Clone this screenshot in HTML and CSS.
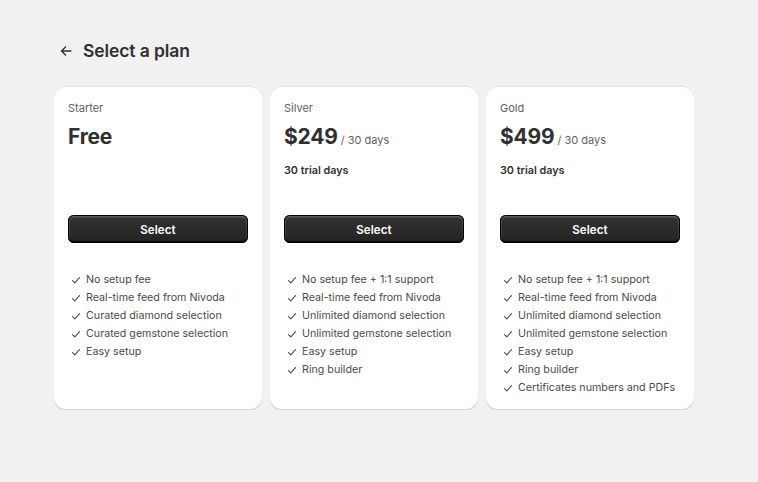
FILE: index.html
```html
<!DOCTYPE html>
<html lang="en">
<head>
<meta charset="utf-8">
<title>Select a plan</title>
<link rel="stylesheet" href="styles.css">
</head>
<body>
<div class="page">
  <div class="header">
    <button class="back" aria-label="Back">
      <svg width="14" height="14" viewBox="0 0 14 14"><path d="M12 7H2.5M6.5 3 2.5 7l4 4" fill="none" stroke="#303030" stroke-width="1.4" stroke-linecap="round" stroke-linejoin="round"/></svg>
    </button>
    <h1 class="title">Select a plan</h1>
  </div>
  <div class="plans">
    <div class="card">
      <div class="top">
        <div class="name">Starter</div>
        <div class="price"><span class="amount">Free</span></div>
      </div>
      <button class="select">Select</button>
      <ul class="features">
        <li><svg class="check" viewBox="0 0 10 10"><path d="M1.5 5.6 3.8 7.8 8.5 2.6" fill="none" stroke="#4a4a4a" stroke-width="1.1" stroke-linecap="round" stroke-linejoin="round"/></svg>No setup fee</li>
        <li><svg class="check" viewBox="0 0 10 10"><path d="M1.5 5.6 3.8 7.8 8.5 2.6" fill="none" stroke="#4a4a4a" stroke-width="1.1" stroke-linecap="round" stroke-linejoin="round"/></svg>Real-time feed from Nivoda</li>
        <li><svg class="check" viewBox="0 0 10 10"><path d="M1.5 5.6 3.8 7.8 8.5 2.6" fill="none" stroke="#4a4a4a" stroke-width="1.1" stroke-linecap="round" stroke-linejoin="round"/></svg>Curated diamond selection</li>
        <li><svg class="check" viewBox="0 0 10 10"><path d="M1.5 5.6 3.8 7.8 8.5 2.6" fill="none" stroke="#4a4a4a" stroke-width="1.1" stroke-linecap="round" stroke-linejoin="round"/></svg>Curated gemstone selection</li>
        <li><svg class="check" viewBox="0 0 10 10"><path d="M1.5 5.6 3.8 7.8 8.5 2.6" fill="none" stroke="#4a4a4a" stroke-width="1.1" stroke-linecap="round" stroke-linejoin="round"/></svg>Easy setup</li>
      </ul>
    </div>
    <div class="card">
      <div class="top">
        <div class="name">Silver</div>
        <div class="price"><span class="amount">$249</span><span class="period">/ 30 days</span></div>
        <div class="trial">30 trial days</div>
      </div>
      <button class="select">Select</button>
      <ul class="features">
        <li><svg class="check" viewBox="0 0 10 10"><path d="M1.5 5.6 3.8 7.8 8.5 2.6" fill="none" stroke="#4a4a4a" stroke-width="1.1" stroke-linecap="round" stroke-linejoin="round"/></svg>No setup fee + 1:1 support</li>
        <li><svg class="check" viewBox="0 0 10 10"><path d="M1.5 5.6 3.8 7.8 8.5 2.6" fill="none" stroke="#4a4a4a" stroke-width="1.1" stroke-linecap="round" stroke-linejoin="round"/></svg>Real-time feed from Nivoda</li>
        <li><svg class="check" viewBox="0 0 10 10"><path d="M1.5 5.6 3.8 7.8 8.5 2.6" fill="none" stroke="#4a4a4a" stroke-width="1.1" stroke-linecap="round" stroke-linejoin="round"/></svg>Unlimited diamond selection</li>
        <li><svg class="check" viewBox="0 0 10 10"><path d="M1.5 5.6 3.8 7.8 8.5 2.6" fill="none" stroke="#4a4a4a" stroke-width="1.1" stroke-linecap="round" stroke-linejoin="round"/></svg>Unlimited gemstone selection</li>
        <li><svg class="check" viewBox="0 0 10 10"><path d="M1.5 5.6 3.8 7.8 8.5 2.6" fill="none" stroke="#4a4a4a" stroke-width="1.1" stroke-linecap="round" stroke-linejoin="round"/></svg>Easy setup</li>
        <li><svg class="check" viewBox="0 0 10 10"><path d="M1.5 5.6 3.8 7.8 8.5 2.6" fill="none" stroke="#4a4a4a" stroke-width="1.1" stroke-linecap="round" stroke-linejoin="round"/></svg>Ring builder</li>
      </ul>
    </div>
    <div class="card">
      <div class="top">
        <div class="name">Gold</div>
        <div class="price"><span class="amount">$499</span><span class="period">/ 30 days</span></div>
        <div class="trial">30 trial days</div>
      </div>
      <button class="select">Select</button>
      <ul class="features">
        <li><svg class="check" viewBox="0 0 10 10"><path d="M1.5 5.6 3.8 7.8 8.5 2.6" fill="none" stroke="#4a4a4a" stroke-width="1.1" stroke-linecap="round" stroke-linejoin="round"/></svg>No setup fee + 1:1 support</li>
        <li><svg class="check" viewBox="0 0 10 10"><path d="M1.5 5.6 3.8 7.8 8.5 2.6" fill="none" stroke="#4a4a4a" stroke-width="1.1" stroke-linecap="round" stroke-linejoin="round"/></svg>Real-time feed from Nivoda</li>
        <li><svg class="check" viewBox="0 0 10 10"><path d="M1.5 5.6 3.8 7.8 8.5 2.6" fill="none" stroke="#4a4a4a" stroke-width="1.1" stroke-linecap="round" stroke-linejoin="round"/></svg>Unlimited diamond selection</li>
        <li><svg class="check" viewBox="0 0 10 10"><path d="M1.5 5.6 3.8 7.8 8.5 2.6" fill="none" stroke="#4a4a4a" stroke-width="1.1" stroke-linecap="round" stroke-linejoin="round"/></svg>Unlimited gemstone selection</li>
        <li><svg class="check" viewBox="0 0 10 10"><path d="M1.5 5.6 3.8 7.8 8.5 2.6" fill="none" stroke="#4a4a4a" stroke-width="1.1" stroke-linecap="round" stroke-linejoin="round"/></svg>Easy setup</li>
        <li><svg class="check" viewBox="0 0 10 10"><path d="M1.5 5.6 3.8 7.8 8.5 2.6" fill="none" stroke="#4a4a4a" stroke-width="1.1" stroke-linecap="round" stroke-linejoin="round"/></svg>Ring builder</li>
        <li><svg class="check" viewBox="0 0 10 10"><path d="M1.5 5.6 3.8 7.8 8.5 2.6" fill="none" stroke="#4a4a4a" stroke-width="1.1" stroke-linecap="round" stroke-linejoin="round"/></svg>Certificates numbers and PDFs</li>
      </ul>
    </div>
  </div>
</div>
</body>
</html>
```
FILE: styles.css
```css
* { box-sizing: border-box; }
html, body {
  margin: 0;
  padding: 0;
  background: #f1f1f1;
  font-family: Inter, "Noto Sans", sans-serif;
  color: #303030;
}
.page {
  padding: 39px 0 0 54px;
}
.header {
  display: flex;
  align-items: center;
  height: 24px;
  gap: 7px;
}
.back {
  width: 20px;
  height: 20px;
  margin-left: 2px;
  padding: 0;
  border: 0;
  background: transparent;
  display: flex;
  align-items: center;
  justify-content: center;
}
.title {
  margin: 0;
  font-size: 17.5px;
  font-weight: 600;
  line-height: 24px;
  letter-spacing: -0.1px;
  color: #303030;
}
.plans {
  display: flex;
  gap: 8px;
  margin-top: 23px;
  align-items: stretch;
}
.card {
  width: 208px;
  background: #fff;
  border-radius: 12px;
  padding: 14px;
  box-shadow: 0 1px 0 rgba(26, 26, 26, 0.07), 0 1px 0 rgba(204, 204, 204, 0.5) inset, 0 -1px 0 rgba(0,0,0,0.17) inset;
}
.top {
  height: 115px;
}
.name {
  font-size: 11px;
  line-height: 16px;
  color: #616161;
}
.price {
  margin-top: 9px;
  display: flex;
  align-items: baseline;
  gap: 3px;
  line-height: 24px;
}
.amount {
  font-size: 21px;
  font-weight: 700;
  letter-spacing: -0.2px;
  color: #303030;
}
.period {
  font-size: 11px;
  color: #616161;
}
.trial {
  margin-top: 11px;
  font-size: 10.8px;
  line-height: 16px;
  font-weight: 600;
  color: #303030;
}
.select {
  display: block;
  width: 100%;
  height: 28px;
  padding: 1px 0 0;
  border: 0;
  border-radius: 6px;
  background: linear-gradient(180deg, #333 0%, #2a2a2a 60%, #222 100%);
  box-shadow: 0 0 0 1px #000 inset, 0 1px 0 1.5px rgba(255,255,255,0.2) inset, 0 -1px 0 1px rgba(0,0,0,0.8) inset;
  color: #fff;
  font-family: Inter, "Noto Sans", sans-serif;
  font-size: 11.5px;
  font-weight: 600;
  letter-spacing: 0.1px;
}
.features {
  list-style: none;
  margin: 27px 0 0;
  padding: 0;
}
.features li {
  display: flex;
  align-items: center;
  height: 18px;
  font-size: 10.7px;
  color: #4a4a4a;
  white-space: nowrap;
}
.check {
  width: 10px;
  height: 10px;
  margin: 1px 5px 0 3px;
  flex: none;
}
```
